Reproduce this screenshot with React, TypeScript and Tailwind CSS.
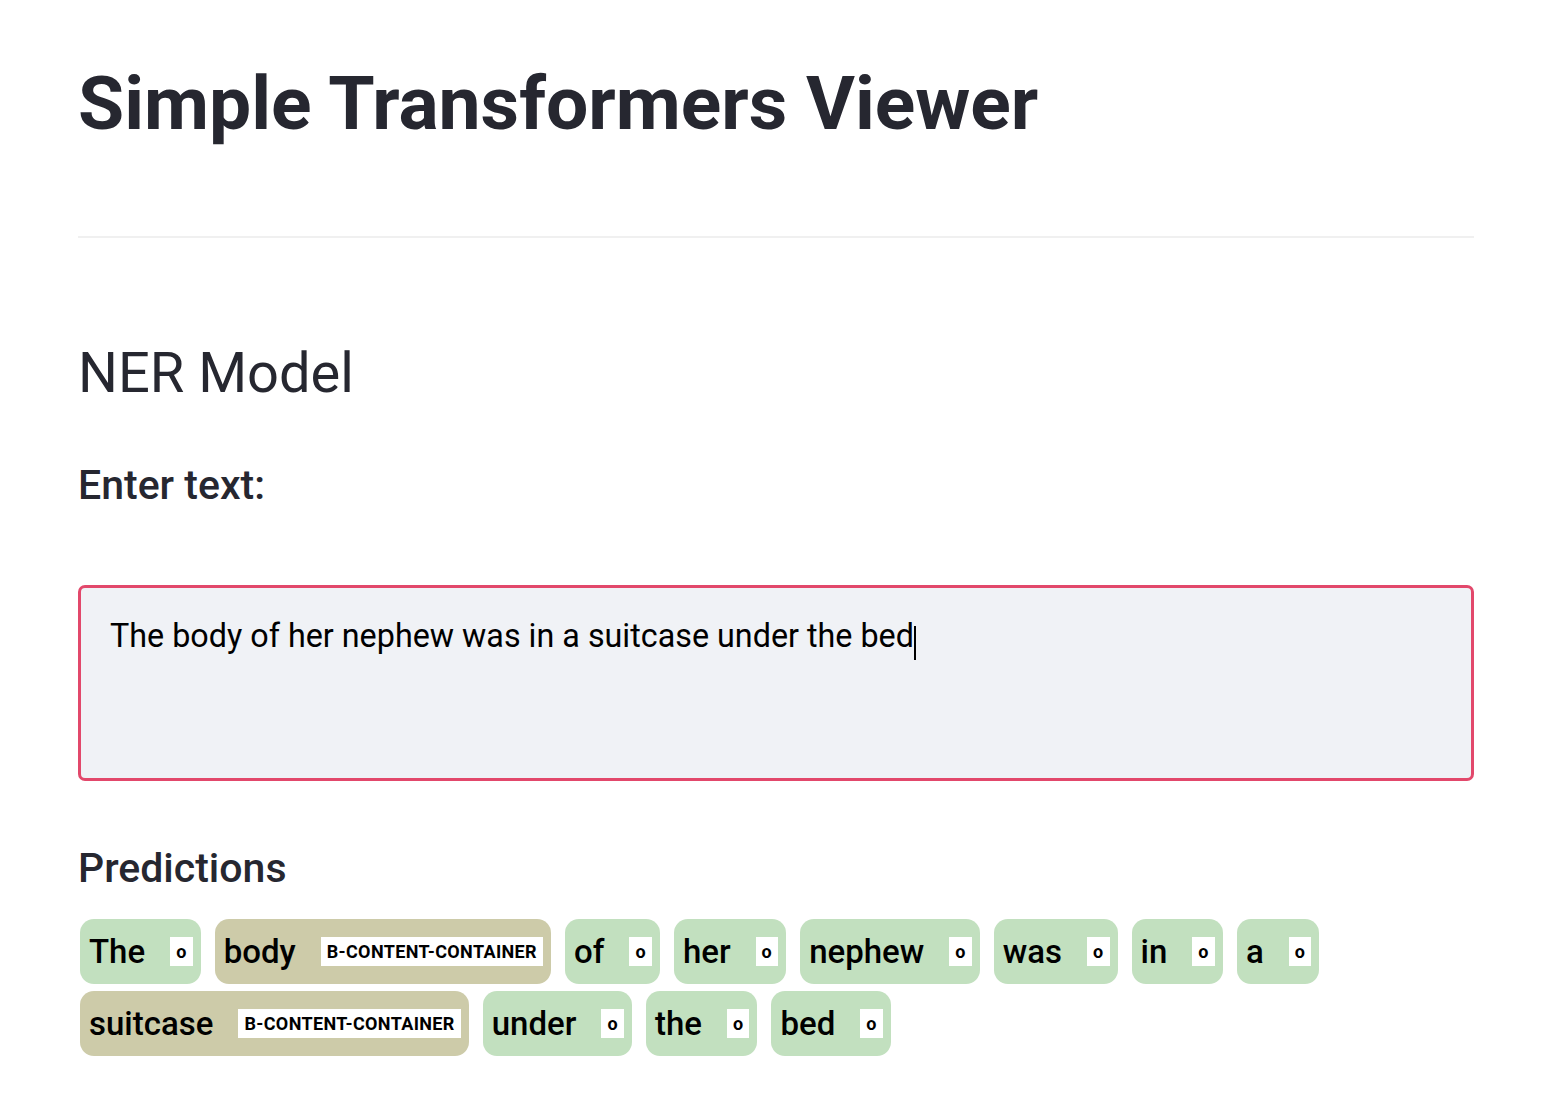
import React from 'react';

// NER predictions viewer
type Token = { word: string; label: string };

const tokens: Token[] = [
  { word: 'The', label: 'o' },
  { word: 'body', label: 'B-CONTENT-CONTAINER' },
  { word: 'of', label: 'o' },
  { word: 'her', label: 'o' },
  { word: 'nephew', label: 'o' },
  { word: 'was', label: 'o' },
  { word: 'in', label: 'o' },
  { word: 'a', label: 'o' },
  { word: 'suitcase', label: 'B-CONTENT-CONTAINER' },
  { word: 'under', label: 'o' },
  { word: 'the', label: 'o' },
  { word: 'bed', label: 'o' },
];

function Chip({ word, label }: Token) {
  const entity = label !== 'o';
  return (
    <span
      className={
        entity
          ? 'inline-flex items-center h-[65px] rounded-[14px] pl-[9px] pr-[8px] bg-[#cdcba9]'
          : 'inline-flex items-center h-[65px] rounded-[14px] pl-[9px] pr-[8px] bg-[#c2e0bf]'
      }
    >
      <span className="text-[33px] leading-none text-black font-medium">{word}</span>
      <span className="ml-[25px] h-[29px] px-[6px] bg-white flex items-center text-[18px] tracking-[0.02em] font-bold leading-none text-black">
        {label}
      </span>
    </span>
  );
}

export default function App() {
  return (
    <div className="min-h-screen bg-white px-[78px] text-[#262730] font-['Roboto',sans-serif]">
      <h1 className="pt-[58px] text-[75px] leading-[90px] font-bold">Simple Transformers Viewer</h1>
      <hr className="mt-[88px] border-0 h-[2px] bg-[#f0f0f0]" />

      <h2 className="mt-[100px] text-[56px] leading-[70px] font-normal">NER Model</h2>

      <div className="mt-[52px] text-[41px] leading-[50px] font-medium">Enter text:</div>

      <div className="mt-[75px] h-[196px] rounded-[7px] border-[3px] border-[#e2486b] bg-[#f0f2f6] px-[29px] pt-[28px]">
        <span className="text-[32.3px] leading-[40px] text-black">
          The body of her nephew was in a suitcase under the bed
        </span>
        <span className="inline-block align-middle w-[2px] h-[34px] bg-black" />
      </div>

      <div className="mt-[62px] text-[41px] leading-[50px] font-medium">Predictions</div>

      <div className="mt-[26px] ml-[2px] flex flex-wrap gap-x-[14px] gap-y-[7px]">
        {tokens.map((t, i) => (
          <Chip key={i} word={t.word} label={t.label} />
        ))}
      </div>
    </div>
  );
}
